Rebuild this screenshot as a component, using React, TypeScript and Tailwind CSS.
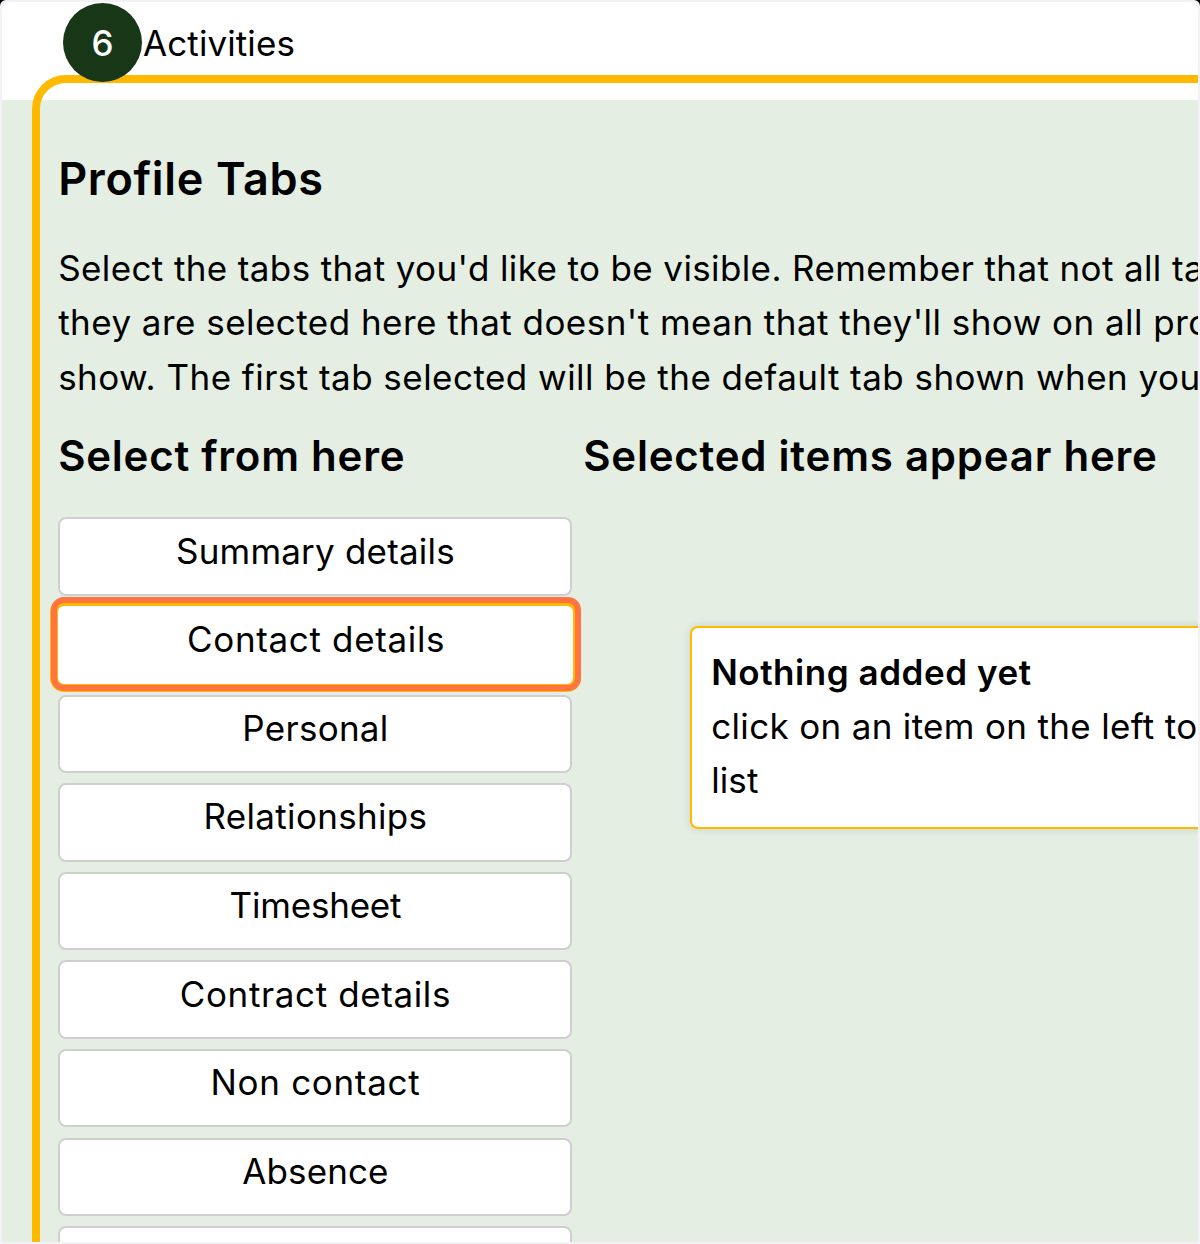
const tabs = [
  { label: "Summary details", text: "tracking-[0.2px]", selected: false },
  { label: "Contact details", text: "tracking-[0.66px]", selected: true },
  { label: "Personal", text: "tracking-[0.28px]", selected: false },
  { label: "Relationships", text: "tracking-[0.33px]", selected: false },
  { label: "Timesheet", text: "tracking-[-0.2px]", selected: false },
  { label: "Contract details", text: "tracking-[0.62px]", selected: false },
  { label: "Non contact", text: "tracking-[0.69px]", selected: false },
  { label: "Absence", text: "tracking-[0.1px]", selected: false },
  { label: "", text: "", selected: false },
];

function StepHeader() {
  return (
    <header className="relative z-10 flex h-[80px] items-start pl-[61px] pt-[0.5px]">
      <span className="flex size-[79px] shrink-0 items-center justify-center rounded-full bg-[#173717] pt-[3px] text-[35px] font-medium text-white">
        6
      </span>
      <span className="pl-px pt-[13.5px] text-[35px] leading-[54px] tracking-[0.1px]">Activities</span>
    </header>
  );
}

function TabButton({ label, text, selected }: { label: string; text: string; selected: boolean }) {
  return (
    <li className="relative h-[78.5px] shrink-0">
      <button
        className={
          selected
            ? "absolute -left-[8px] -right-[9.4px] -top-[8px] h-[94px] rounded-[14px] border-8 border-[#ffba00] bg-white"
            : "h-full w-full rounded-[8px] border-[2.5px] border-[#cfcfcf] bg-white"
        }
      >
        <span className={`block pl-[1px] text-[35px] leading-[54px] ${selected ? "mt-[-11px]" : "mt-[-12px]"} ${text}`}>
          {label || "\u00a0"}
        </span>
      </button>
      {selected && (
        <span className="absolute -left-[7px] -right-[9.5px] -top-[9px] h-[94px] rounded-[13px] border-[6px] border-[#ff7442]" />
      )}
    </li>
  );
}

export default function App() {
  return (
    <div className="h-[1244px] w-[1200px] overflow-hidden bg-[linear-gradient(#000_50%,#f2f1f6_50%)] font-['Inter',sans-serif] text-black">
      <div className="h-full w-full overflow-hidden rounded-t-[6px] border-2 border-[#f2f1f6] bg-[#f2f1f6]">
        <div className="flex h-full flex-col overflow-hidden rounded-t-[8px] bg-[linear-gradient(#fff_98.3px,#e4eee2_98.3px)]">
          <StepHeader />
          <main className="-mr-10 ml-[30.4px] mt-[-7px] h-[1300px] shrink-0 rounded-tl-[34px] border-8 border-[#ffba00] pl-[17.8px]">
            <h2 className="mt-[66px] whitespace-nowrap text-[45px] font-semibold leading-[60px] tracking-[0.65px]">
              Profile Tabs
            </h2>
            <p className="mt-[32px] whitespace-nowrap text-[35px] leading-[54.5px]">
              <span className="block tracking-[0.38px]">
                Select the tabs that you'd like to be visible. Remember that not all ta
              </span>
              <span className="block tracking-[0.46px]">
                they are selected here that doesn't mean that they'll show on all pro
              </span>
              <span className="block tracking-[0.46px]">
                show. The first tab selected will be the default tab shown when you
              </span>
            </p>
            <div className="mt-[22px] flex whitespace-nowrap">
              <section className="w-[525px] shrink-0">
                <h3 className="text-[42px] font-semibold leading-[60px] tracking-[0.75px]">Select from here</h3>
                <ul className="mt-[31.4px] flex w-[513.5px] flex-col gap-[10.1px]">
                  {tabs.map((tab, index) => (
                    <TabButton key={index} {...tab} />
                  ))}
                </ul>
              </section>
              <section className="w-[700px] shrink-0">
                <h3 className="text-[42px] font-semibold leading-[60px] tracking-[0.77px]">
                  Selected items appear here
                </h3>
                <div className="ml-[107px] mt-[139.6px] h-[203.5px] rounded-[8px] border-[2.5px] border-[#ffba00] bg-white pl-[19px] pt-[17px] text-[35px] leading-[54.3px] shadow-[0_0_10px_rgba(0,0,0,0.12)]">
                  <strong className="block font-semibold tracking-[0.54px]">Nothing added yet</strong>
                  <span className="block tracking-[0.33px]">click on an item on the left to</span>
                  <span className="block tracking-[0.1px]">list</span>
                </div>
              </section>
            </div>
          </main>
        </div>
      </div>
    </div>
  );
}
